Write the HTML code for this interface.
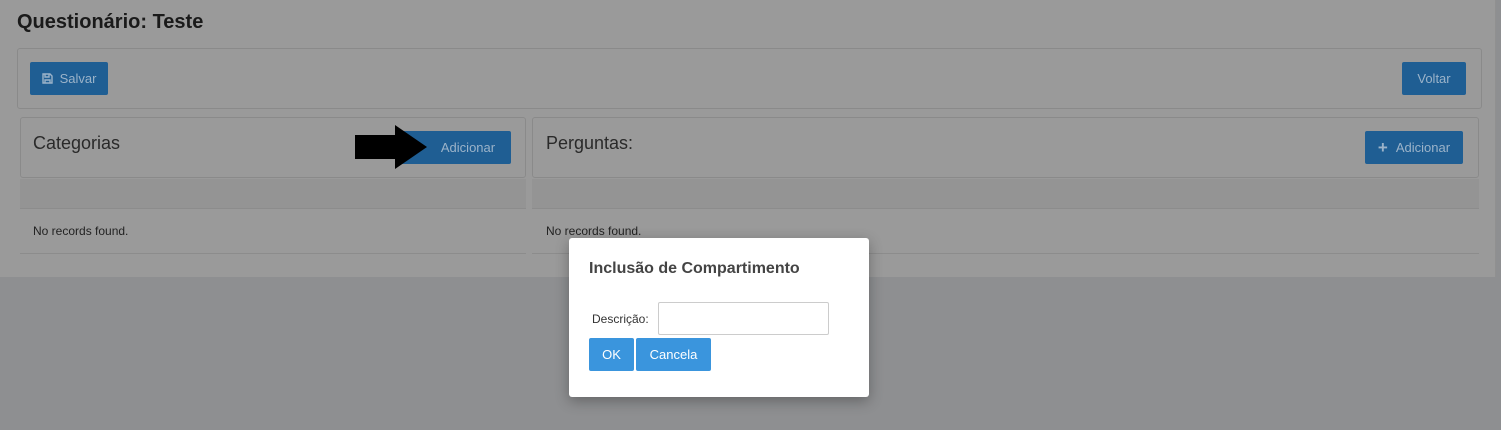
<!DOCTYPE html>
<html><head><meta charset="utf-8"><style>
*{box-sizing:border-box;margin:0;padding:0}
body{width:1501px;height:430px;background:#8e8f91;font-family:"Liberation Sans",sans-serif;position:relative;overflow:hidden}
.page{position:absolute;left:0;top:0;width:1496px;height:277px;background:#9a9a9a;border-right:1px solid #909090}
.abs{position:absolute}
.title{left:17px;top:11px;font-size:20px;font-weight:bold;color:#1a1a1a}
.box{border:1px solid #8a8a8a;border-radius:3px}
.btn{background:#1f5e93;color:#9bb3c9;font-size:13px;border-radius:2px;display:flex;align-items:center;justify-content:center}
.grey{background:#949494}
.line{height:1px;background:#8c8c8c}
.txt{font-size:12px;color:#222}
.dlg{left:569px;top:238px;width:300px;height:159px;background:#fff;border-radius:3px;box-shadow:0 4px 14px rgba(0,0,0,.3)}
.b2{background:#3a95dd;color:#fff;font-size:13px;border-radius:2px;display:flex;align-items:center;justify-content:center}
</style></head><body>
<div class="page">
<div class="abs title">Questionário: Teste</div>
<div class="abs box" style="left:17px;top:48px;width:1465px;height:61px"></div>
<div class="abs btn" style="left:30px;top:62px;width:78px;height:33px"><svg width="11" height="11" viewBox="0 0 11 11" style="margin-right:7px"><path d="M1 1h7l2 2v7H1z M3 1v3h4V1 M3 10V7h5v3" fill="none" stroke="#9bb3c9" stroke-width="1.4"/></svg>Salvar</div>
<div class="abs btn" style="left:1402px;top:62px;width:64px;height:33px">Voltar</div>
<div class="abs box" style="left:20px;top:117px;width:506px;height:61px"></div>
<div class="abs" style="left:33px;top:133px;font-size:18px;color:#2a2a2a">Categorias</div>
<div class="abs btn" style="left:400px;top:131px;width:111px;height:33px;padding-left:25px">Adicionar</div>
<svg class="abs" style="left:353px;top:123px" width="80" height="48" viewBox="0 0 80 48"><path d="M2 12h40V2l32 22-32 22V36H2z" fill="#000"/></svg>
<div class="abs box" style="left:532px;top:117px;width:947px;height:61px"></div>
<div class="abs" style="left:546px;top:133px;font-size:18px;color:#2a2a2a">Perguntas:</div>
<div class="abs btn" style="left:1365px;top:131px;width:98px;height:33px"><span style="font-weight:bold;font-size:17px;margin-right:8px">+</span>Adicionar</div>
<div class="abs grey" style="left:20px;top:179px;width:506px;height:29px"></div>
<div class="abs grey" style="left:532px;top:179px;width:947px;height:29px"></div>
<div class="abs line" style="left:20px;top:208px;width:506px"></div>
<div class="abs line" style="left:532px;top:208px;width:947px"></div>
<div class="abs txt" style="left:33px;top:224px">No records found.</div>
<div class="abs txt" style="left:546px;top:224px">No records found.</div>
<div class="abs line" style="left:20px;top:253px;width:506px"></div>
<div class="abs line" style="left:532px;top:253px;width:947px"></div>
</div>
<div class="abs dlg">
<div class="abs" style="left:20px;top:22px;font-size:16px;font-weight:bold;color:#444">Inclusão de Compartimento</div>
<div class="abs" style="left:23px;top:74px;font-size:12px;color:#333">Descrição:</div>
<div class="abs" style="left:89px;top:64px;width:171px;height:33px;border:1px solid #ccc;border-radius:2px"></div>
<div class="abs b2" style="left:20px;top:100px;width:45px;height:33px">OK</div>
<div class="abs b2" style="left:67px;top:100px;width:75px;height:33px">Cancela</div>
</div>
</body></html>
